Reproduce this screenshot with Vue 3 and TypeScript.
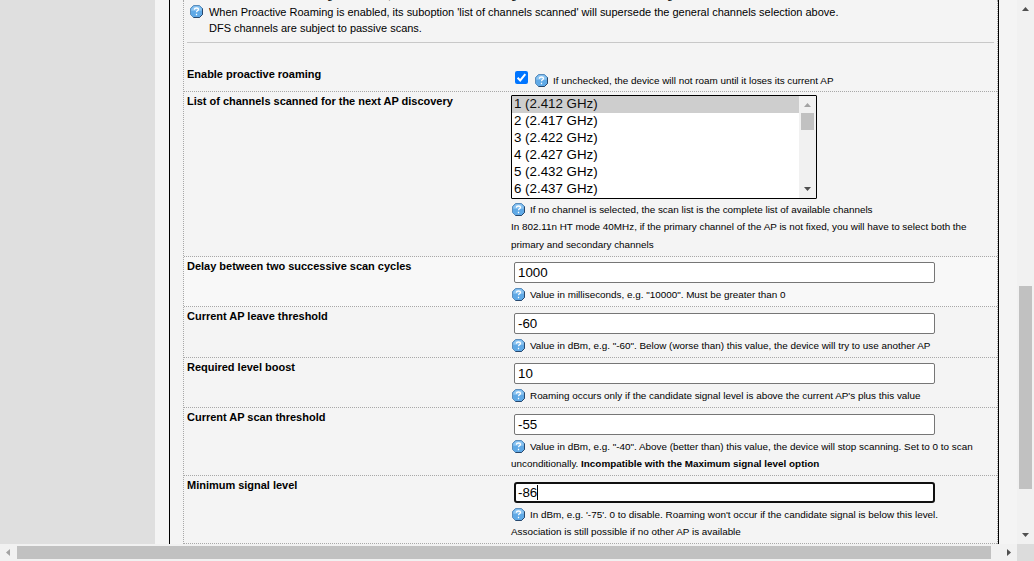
<script setup lang="ts">
import { defineComponent, h } from 'vue'

interface Field {
  id: string
  label: string
  value: string
  lines: string[]
  strong?: string
}

const channels: string[] = [
  '1 (2.412 GHz)',
  '2 (2.417 GHz)',
  '3 (2.422 GHz)',
  '4 (2.427 GHz)',
  '5 (2.432 GHz)',
  '6 (2.437 GHz)',
]

const fields: Field[] = [
  { id: 'delay', label: 'Delay between two successive scan cycles', value: '1000', lines: ['Value in milliseconds, e.g. "10000". Must be greater than 0'] },
  { id: 'leave', label: 'Current AP leave threshold', value: '-60', lines: ['Value in dBm, e.g. "-60". Below (worse than) this value, the device will try to use another AP'] },
  { id: 'boost', label: 'Required level boost', value: '10', lines: ["Roaming occurs only if the candidate signal level is above the current AP's plus this value"] },
  { id: 'scan', label: 'Current AP scan threshold', value: '-55', lines: ['Value in dBm, e.g. "-40". Above (better than) this value, the device will stop scanning. Set to 0 to scan', 'unconditionally. '], strong: 'Incompatible with the Maximum signal level option' },
  { id: 'minimum', label: 'Minimum signal level', value: '-86', lines: ["In dBm, e.g. '-75'. 0 to disable. Roaming won't occur if the candidate signal is below this level.", 'Association is still possible if no other AP is available'] },
]

const HelpIcon = defineComponent({
  setup: () => () =>
    h('svg', { width: 13, height: 13, viewBox: '0 0 13 13' }, [
      h('path', { d: 'M3.500 .5h6L12.500 3.500v6L9.500 12.500h-6L.5 9.500v-6z', fill: '#5fa9e6', stroke: '#5b8dbb' }),
      h('path', { d: 'M12.500 3.500v6L9.500 12.500h-6', fill: 'none', stroke: '#28476b' }),
      h('path', { d: 'M3.800 1.300h5.400l2.500 2.500v2H1.300v-2z', fill: '#8cc4f0' }),
      h('path', { d: 'M4.500 4.800V4q0-1 2-1t2 1.200q0 .9-1 1.500t-1 1.600M6.500 8.800v1.400', fill: 'none', stroke: '#fff', 'stroke-width': 1.3 }),
    ]),
})
</script>

<template>
  <div class="window">
    <div class="viewport">
      <aside class="sidebar"></aside>
      <main class="panel">
        <section class="table">
          <div class="note">
            <div class="cut"><span>g</span><span class="comma">,</span><span>g</span><span class="last">g</span></div>
            <div class="note-body">
              <HelpIcon class="icon" />
              <div class="note-text">
                <div>When Proactive Roaming is enabled, its suboption 'list of channels scanned' will supersede the general channels selection above.</div>
                <div>DFS channels are subject to passive scans.</div>
              </div>
            </div>
            <div class="rule"></div>
          </div>

          <div class="row enable">
            <div class="label">Enable proactive roaming</div>
            <div class="check-line">
              <span class="checkbox">
                <svg width="13" height="13" viewBox="0 0 13 13"><path d="M2.600 6.800 5.200 9.400 10.300 3.200" fill="none" stroke="#fff" stroke-width="2" /></svg>
              </span>
              <HelpIcon class="icon" />
              <span class="help">If unchecked, the device will not roam until it loses its current AP</span>
            </div>
          </div>

          <div class="row list">
            <div class="label">List of channels scanned for the next AP discovery</div>
            <div class="control">
              <div class="select">
                <div class="options">
                  <div v-for="(c, i) in channels" :key="c" class="option" :class="{ selected: i === 0 }">{{ c }}</div>
                </div>
                <div class="select-bar">
                  <svg class="arrow" width="17" height="17" viewBox="0 0 17 17"><path d="M5 11h7L8.500 7z" fill="#a3a3a3" /></svg>
                  <div class="select-thumb"></div>
                  <svg class="arrow end" width="17" height="17" viewBox="0 0 17 17"><path d="M5 6h7l-3.500 4z" fill="#505050" /></svg>
                </div>
              </div>
              <div class="help-line first"><HelpIcon class="icon" /><span class="help">If no channel is selected, the scan list is the complete list of available channels</span></div>
              <div class="help-line"><span class="help">In 802.11n HT mode 40MHz, if the primary channel of the AP is not fixed, you will have to select both the</span></div>
              <div class="help-line last-line"><span class="help">primary and secondary channels</span></div>
            </div>
          </div>

          <div v-for="f in fields" :key="f.id" class="row" :class="f.id">
            <div class="label">{{ f.label }}</div>
            <div class="control">
              <div class="input" :class="{ focused: f.id === 'minimum' }"><span>{{ f.value }}</span><i v-if="f.id === 'minimum'" class="caret"></i></div>
              <div v-for="(line, i) in f.lines" :key="i" class="help-line">
                <HelpIcon v-if="i === 0" class="icon" />
                <span class="help">{{ line }}<b v-if="f.strong && i === 1">{{ f.strong }}</b></span>
              </div>
            </div>
          </div>
        </section>
      </main>
    </div>
    <div class="vbar">
      <svg width="17" height="17" viewBox="0 0 17 17"><path d="M5 11h7L8.500 7z" fill="#505050" /></svg>
      <div class="vthumb"></div>
      <svg class="end" width="17" height="17" viewBox="0 0 17 17"><path d="M5 6h7l-3.500 4z" fill="#505050" /></svg>
    </div>
    <div class="hbar">
      <svg width="17" height="17" viewBox="0 0 17 17"><path d="M10 5v7L6 8.500z" fill="#a3a3a3" /></svg>
      <div class="hthumb"></div>
      <svg class="end" width="17" height="17" viewBox="0 0 17 17"><path d="M7 5v7l4-3.500z" fill="#505050" /></svg>
    </div>
    <div class="corner"></div>
  </div>
</template>

<style>
html, body { margin: 0; overflow: hidden; }
</style>

<style scoped>
.window { width: 1034px; height: 561px; display: grid; grid-template: 544px 17px / 1017px 17px; font: 11px/16px "Liberation Sans", Arial, sans-serif; color: #000; background: #f4f4f4; overflow: hidden; }
.window * { box-sizing: border-box; }
svg { display: block; flex: none; }
.viewport { display: flex; overflow: hidden; }
.sidebar { width: 155px; background: #dfdfdf; flex: none; }
.panel { width: 830px; margin-left: 14px; padding-left: 13px; border-left: 1px solid #000; border-right: 1px solid #000; }
.table { height: 544px; border-left: 1px dotted #a8a8a8; border-right: 1px dotted #a8a8a8; }
.note { height: 43px; padding: 0 3px; overflow: hidden; }
.cut { height: 4px; display: flex; padding-left: 140px; overflow: hidden; }
.cut span { width: 6px; margin-top: -13px; flex: none; }
.cut .comma { width: 3px; margin-left: 55px; margin-right: 120px; }
.cut .last { margin-left: 150px; }
.note-body { display: flex; height: 38px; }
.note .icon { margin: 1px 6px 0 3px; }
.note-text { white-space: nowrap; letter-spacing: -0.012px; }
.rule { height: 1px; background: #c8c8c8; }
.row { display: flex; border-bottom: 1px dotted #a8a8a8; white-space: nowrap; }
.label { width: 327px; padding: 1px 0 0 3px; font-weight: bold; letter-spacing: -0.015px; flex: none; }
.row.enable { height: 49px; }
.enable .label { padding-top: 23px; }
.row.list { height: 165px; }
.row.delay, .row.boost { height: 50px; }
.row.leave { height: 51px; }
.row.scan, .row.minimum { height: 68px; }
.row.delay { background: #f8f8f8; }
.check-line { display: flex; align-items: flex-start; padding: 28px 0 0 4px; }
.checkbox { width: 13px; height: 13px; border-radius: 2px; background: #0075ff; }
.check-line .icon { margin: 3px 5px 0 7px; }
.check-line .help { margin-top: 1px; }
.select { width: 306px; height: 104px; margin-top: 3px; border: 1px solid #000; border-radius: 1px; background: #fff; display: flex; overflow: hidden; }
.options { width: 287px; flex: none; }
.option { height: 17px; line-height: 16px; padding-left: 2px; font-size: 13.333px; }
.option.selected { background: #cecece; color: #101010; }
.select-bar { width: 17px; height: 102px; background: #f1f1f1; display: flex; flex-direction: column; align-items: center; }
.select-thumb { width: 13px; height: 17px; background: #c1c1c1; }
.end { margin-top: auto; }
.help { font-size: 9.88px; line-height: 17px; }
.help-line { height: 17px; display: flex; }
.help-line .icon { margin: 2px 5px 0 1px; }
.list .first { margin-top: 2px; }
.list .last-line { margin-top: 1px; }
.input { width: 421px; height: 21px; margin: 5px 0 3px 3px; padding-left: 3px; border: 1px solid #767676; border-radius: 2px; background: #fff; font-size: 13.333px; line-height: 19px; display: flex; }
.leave .input, .scan .input, .minimum .input { margin-top: 6px; }
.input.focused { border: 2px solid #101010; border-radius: 3px; padding-left: 2px; line-height: 17px; }
.caret { width: 1px; height: 15px; margin-top: 1px; background: #000; }
.vbar { background: #f1f1f1; display: flex; flex-direction: column; }
.vthumb { width: 13px; height: 203px; margin: 269px 0 0 2px; background: #c1c1c1; }
.hbar { background: #f1f1f1; display: flex; align-items: center; }
.hbar .end { margin: 0 0 0 auto; }
.hthumb { width: 974px; height: 13px; background: #c1c1c1; }
.corner { background: #dcdcdc; }
</style>
